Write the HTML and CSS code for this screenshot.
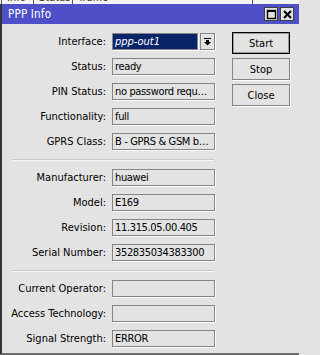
FILE: index.html
```html
<!DOCTYPE html>
<html>
<head>
<meta charset="utf-8">
<link rel="stylesheet" href="styles.css">
</head>
<body>
<div class="behind">
  <div class="behind-row">
    <span class="bt bt-a">Info</span>
    <span class="bt bt-b">Status</span>
    <span class="bt bt-c">Traffic</span>
    <span class="bt bt-d"></span>
  </div>
</div>
<div class="window">
  <div class="titlebar">
    <span class="title">PPP Info</span>
    <div class="tb-btns">
      <span class="tb-btn"><svg width="11" height="11" viewBox="0 0 11 11"><rect x="1.5" y="1.5" width="8" height="8" fill="none" stroke="#000" stroke-width="1.4"/><rect x="1" y="1" width="9" height="2" fill="#000"/></svg></span>
      <span class="tb-btn"><svg width="11" height="11" viewBox="0 0 11 11"><path d="M2 2 L9 9 M9 2 L2 9" stroke="#000" stroke-width="2"/></svg></span>
    </div>
  </div>
  <div class="content">
    <div class="form">
      <div class="row"><span class="lbl">Interface:</span>
        <div class="combo">
          <div class="sel"><span>ppp-out1</span></div>
          <span class="drop"><svg width="7" height="8" viewBox="0 0 7 8"><rect x="0" y="0" width="7" height="1" fill="#000"/><rect x="2" y="2" width="3" height="2" fill="#000"/><path d="M0 4 L7 4 L3.5 7.5 Z" fill="#000"/></svg></span>
        </div>
      </div>
      <div class="row"><span class="lbl">Status:</span><div class="fld">ready</div></div>
      <div class="row"><span class="lbl">PIN Status:</span><div class="fld">no password requ…</div></div>
      <div class="row"><span class="lbl">Functionality:</span><div class="fld">full</div></div>
      <div class="row"><span class="lbl">GPRS Class:</span><div class="fld">B - GPRS &amp; GSM b…</div></div>
      <div class="sep"></div>
      <div class="row"><span class="lbl">Manufacturer:</span><div class="fld">huawei</div></div>
      <div class="row"><span class="lbl">Model:</span><div class="fld">E169</div></div>
      <div class="row"><span class="lbl">Revision:</span><div class="fld">11.315.05.00.405</div></div>
      <div class="row"><span class="lbl">Serial Number:</span><div class="fld">352835034383300</div></div>
      <div class="sep"></div>
      <div class="row"><span class="lbl">Current Operator:</span><div class="fld"></div></div>
      <div class="row"><span class="lbl">Access Technology:</span><div class="fld"></div></div>
      <div class="row"><span class="lbl">Signal Strength:</span><div class="fld">ERROR</div></div>
    </div>
    <div class="actions">
      <div class="btn btn-default">Start</div>
      <div class="btn">Stop</div>
      <div class="btn">Close</div>
    </div>
  </div>
</div>
</body>
</html>
```

FILE: styles.css
```css
html {
  background: #e3e3e3;
}
body {
  margin: 0;
  padding: 0;
  width: 299px;
  height: 355px;
  overflow: hidden;
  background: #e3e3e3;
  font-family: "DejaVu Sans Condensed", "DejaVu Sans", sans-serif;
  font-size: 11px;
  color: #000;
}

.behind {
  height: 4px;
  overflow: hidden;
  background: #f4f4f4;
}
.behind-row {
  display: flex;
  margin-top: -9px;
  height: 13px;
  line-height: 13px;
}
.bt {
  border-left: 1px solid #555;
  padding-left: 5px;
  box-sizing: border-box;
  color: #333;
}
.bt-a { margin-left: 1px; width: 32px; }
.bt-b { width: 39px; }
.bt-c { width: 43px; }
.bt-d { margin-left: 137px; width: 10px; }

.window {
  border-left: 2px solid #333;
  border-bottom: 2px solid #6b6b6b;
  height: 349px;
  display: flex;
  flex-direction: column;
}

.titlebar {
  height: 20px;
  background: #4f4fc8;
  display: flex;
  align-items: center;
  justify-content: space-between;
  padding: 0 5px 0 6px;
}
.title {
  color: #fff;
  font-size: 11.5px;
  letter-spacing: 0.2px;
}
.tb-btns {
  display: flex;
  gap: 2px;
}
.tb-btn {
  width: 14px;
  height: 14px;
  box-sizing: border-box;
  background: #e3e3e3;
  border: 1px solid #404040;
  display: flex;
  align-items: center;
  justify-content: center;
}
.tb-btn svg { display: block; }

.content {
  flex: 1;
  display: flex;
  padding-top: 8px;
}

.form {
  display: flex;
  flex-direction: column;
  gap: 7px;
  padding-top: 1px;
  width: 214px;
}
.row {
  display: flex;
  align-items: flex-start;
  height: 18px;
}
.lbl {
  width: 104px;
  text-align: right;
  line-height: 17px;
  white-space: nowrap;
  margin-right: 6px;
}
.fld {
  width: 103px;
  height: 17px;
  box-sizing: border-box;
  border: 1px solid #858585;
  box-shadow: 1px 1px 0 #fff;
  padding-left: 2px;
  line-height: 15px;
  white-space: nowrap;
  overflow: hidden;
  letter-spacing: -0.35px;
}
.combo {
  width: 103px;
  display: flex;
  gap: 2px;
}
.sel {
  flex: 1;
  height: 17px;
  box-sizing: border-box;
  border: 1px solid #858585;
  box-shadow: 1px 1px 0 #fff;
  background: #0a246a;
  padding: 1px;
}
.sel span {
  display: block;
  height: 13px;
  line-height: 13px;
  color: #fff;
  font-style: italic;
  padding-left: 1px;
}
.drop {
  width: 15px;
  height: 17px;
  box-sizing: border-box;
  border: 1px solid #858585;
  box-shadow: 1px 1px 0 #fff;
  display: flex;
  align-items: center;
  justify-content: center;
}
.drop svg { display: block; }

.sep {
  margin: 1px 0 1px 10px;
  width: 202px;
  border-top: 1px solid #c6c6c6;
  border-bottom: 1px solid #f7f7f7;
}

.actions {
  margin-left: 16px;
  display: flex;
  flex-direction: column;
  gap: 4px;
}
.btn {
  width: 58px;
  height: 22px;
  box-sizing: border-box;
  border: 1px solid #858585;
  box-shadow: 1px 1px 0 #fff;
  display: flex;
  align-items: center;
  justify-content: center;
  font-size: 11px;
}
.btn-default {
  border: 1px solid #000;
  box-shadow: inset 0 0 0 1px #9a9a9a;
}
```
